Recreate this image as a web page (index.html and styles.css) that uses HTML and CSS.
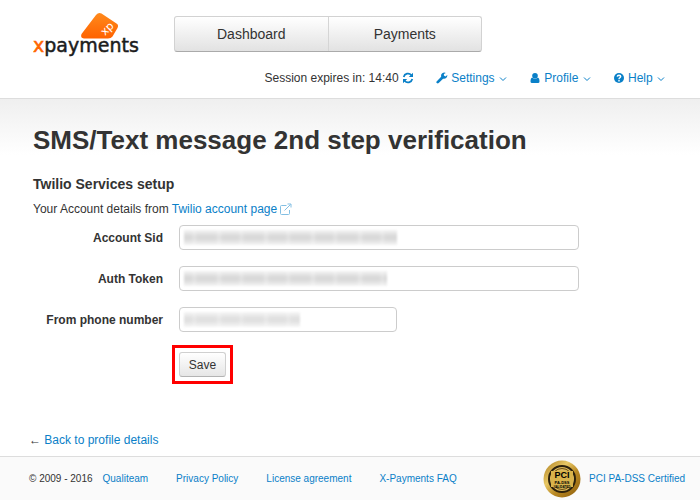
FILE: index.html
```html
<!DOCTYPE html>
<html lang="en">
<head>
  <meta charset="UTF-8">
  <title>SMS/Text message 2nd step verification</title>
  <link rel="stylesheet" href="styles.css">
</head>
<body>
  <header class="header">
    <div class="header-top">
      <a href="#" class="logo">
        <svg width="106" height="46" viewBox="0 0 106 46">
          <defs>
            <linearGradient id="card" x1="0" y1="0" x2="0" y2="1">
              <stop offset="0" stop-color="#ff8a1c"/>
              <stop offset="1" stop-color="#ff6200"/>
            </linearGradient>
          </defs>
          <path d="M51 26.500Q47 26 48.500 22L63 3Q65.500 0 68.500 1.500L83.500 11.500Q86 13 84.500 16L79.500 24.500Q78 26.500 75 26.500Z" fill="url(#card)"/>
          <text x="72" y="24" class="logo-mark" transform="rotate(-45 72 24)">xp</text>
          <text x="0" y="40" class="logo-text"><tspan class="logo-x">x</tspan>payments</text>
        </svg>
      </a>
      <nav class="main-nav">
        <a href="#">Dashboard</a>
        <a href="#">Payments</a>
      </nav>
    </div>
    <div class="user-bar">
      <span class="session">Session expires in: 14:40
        <a href="#" aria-label="Refresh session"><svg class="icon" viewBox="0 0 12 12"><path d="M1.700 5A4.400 4.400 0 0 1 9.400 3.200M10.300 7A4.400 4.400 0 0 1 2.600 8.800" fill="none" stroke="currentColor" stroke-width="1.700"/><path d="M11 .8V5H6.800ZM1 11.200V7H5.200Z" fill="currentColor"/></svg></a>
      </span>
      <a href="#" class="menu-link">
        <svg class="icon" viewBox="0 0 12 12"><path d="M11.300 3.100 9.400 4.400 7.900 3.600V2L9.800.9A3.300 3.300 0 0 0 5.200 4.800L.8 9.200a1.300 1.300 0 0 0 1.900 1.900L7.100 6.700A3.300 3.300 0 0 0 11.300 3.100Z" fill="currentColor"/></svg>
        Settings
        <svg class="caret" viewBox="0 0 8 6"><path d="M1 1.500 4 4.500 7 1.500" fill="none" stroke="currentColor"/></svg>
      </a>
      <a href="#" class="menu-link">
        <svg class="icon" viewBox="0 0 12 12"><circle cx="6" cy="3.800" r="2.800" fill="currentColor"/><path d="M3.200 5.400Q1.500 6 1.500 9.500 1.500 11 3 11H9Q10.500 11 10.500 9.500 10.500 6 8.800 5.400 6 8 3.200 5.400Z" fill="currentColor"/></svg>
        Profile
        <svg class="caret" viewBox="0 0 8 6"><path d="M1 1.500 4 4.500 7 1.500" fill="none" stroke="currentColor"/></svg>
      </a>
      <a href="#" class="menu-link">
        <svg class="icon" viewBox="0 0 12 12"><circle cx="6" cy="6" r="5" fill="currentColor"/><path d="M4.200 4.700Q4.400 3.200 6 3.200 7.700 3.300 7.700 4.600 7.700 5.400 6.700 5.900 6 6.200 6 7.200M6 8V9.400" fill="none" stroke="#fff" stroke-width="1.400"/></svg>
        Help
        <svg class="caret" viewBox="0 0 8 6"><path d="M1 1.500 4 4.500 7 1.500" fill="none" stroke="currentColor"/></svg>
      </a>
    </div>
  </header>

  <main class="content">
    <h1>SMS/Text message 2nd step verification</h1>
    <h2>Twilio Services setup</h2>
    <p class="intro">Your Account details from <a href="#">Twilio account page <svg class="icon external" viewBox="0 0 12 12"><path d="M6.500 2.500H1.500Q.5 2.500 .5 3.500V10.500Q.5 11.500 1.500 11.500H8.500Q9.500 11.500 9.500 10.500V7M4.500 7.500 10.500 1.500M7.500 1H11V4.500" fill="none" stroke="currentColor"/></svg></a></p>

    <form class="setup-form">
      <label for="sid">Account Sid</label>
      <div class="field">
        <input type="text" id="sid">
        <span class="masked masked-long"></span>
      </div>
      <label for="token">Auth Token</label>
      <div class="field">
        <input type="text" id="token">
        <span class="masked masked-medium"></span>
      </div>
      <label for="phone">From phone number</label>
      <div class="field field-short">
        <input type="text" id="phone">
        <span class="masked masked-short"></span>
      </div>
      <div class="highlight">
        <button type="button">Save</button>
      </div>
    </form>

    <p class="back">← <a href="#">Back to profile details</a></p>
  </main>

  <footer class="footer">
    <span>© 2009 - 2016</span>
    <a href="#" class="company">Qualiteam</a>
    <a href="#">Privacy Policy</a>
    <a href="#">License agreement</a>
    <a href="#">X-Payments FAQ</a>
    <a href="#" class="pci">
      <svg width="38" height="38" viewBox="0 0 38 38">
        <defs>
          <linearGradient id="gold" x1="0" y1="0" x2="1" y2="1">
            <stop offset="0" stop-color="#a87818"/>
            <stop offset=".35" stop-color="#e8c866"/>
            <stop offset=".6" stop-color="#b88722"/>
            <stop offset="1" stop-color="#8c5d0c"/>
          </linearGradient>
        </defs>
        <circle cx="19" cy="19" r="18.500" fill="url(#gold)"/>
        <circle cx="19" cy="19" r="13" fill="#dcb95a" stroke="#2c210c" stroke-width="2"/>
        <circle cx="19" cy="19" r="10.500" fill="none" stroke="#6d4f16"/>
        <path d="M8 11H30V27H8Z" fill="#d9b34b"/>
        <text x="19" y="18" class="seal-title">PCI</text>
        <text x="19" y="24" class="seal-text">PA-DSS</text>
        <text x="19" y="28" class="seal-small">VALIDATED</text>
      </svg>
      PCI PA-DSS Certified
    </a>
  </footer>
</body>
</html>
```

FILE: styles.css
```css
* {
  box-sizing: border-box;
}
body {
  margin: 0;
  min-height: 100vh;
  display: flex;
  flex-direction: column;
  font-family: "Liberation Sans", Arial, sans-serif;
  font-size: 12px;
  line-height: 16px;
  color: #333;
  background: #fff;
}
a {
  color: #0a80c8;
  text-decoration: none;
}
a:hover {
  text-decoration: underline;
}

/* Header */
.header {
  padding: 12px 35px 12px 33px;
  border-bottom: 1px solid #ddd;
}
.header-top {
  display: flex;
  gap: 35px;
  height: 46px;
}
.logo svg {
  display: block;
}
.logo-text {
  font-family: "DejaVu Sans", sans-serif;
  font-size: 19px;
  fill: #1c1c1c;
  stroke: #1c1c1c;
  stroke-width: .5px;
}
.logo-x {
  fill: #f60;
  stroke: #f60;
}
.logo-mark {
  font-family: "DejaVu Sans", sans-serif;
  font-size: 11px;
  fill: #fff;
}
.main-nav {
  display: flex;
  width: 308px;
  height: 36px;
  margin-top: 4px;
  border: 1px solid #d2d2d2;
  border-bottom-color: #aaa;
  border-radius: 3px;
  background: linear-gradient(#fff, #e2e2e2);
}
.main-nav a {
  flex: 1;
  font-size: 14px;
  line-height: 34px;
  text-align: center;
  color: #333;
}
.main-nav a + a {
  border-left: 1px solid #d5d5d5;
}
.user-bar {
  display: flex;
  justify-content: flex-end;
  gap: 22px;
  margin-top: 12px;
}
.icon {
  width: 12px;
  height: 12px;
  vertical-align: -2px;
}
.caret {
  width: 8px;
  height: 6px;
  margin-left: 1px;
}

/* Content */
.content {
  flex: 1;
  padding: 24px 33px 8px;
  background: linear-gradient(#efefef, #fff 56px);
}
h1 {
  margin: 0 0 18px;
  font-size: 26px;
  line-height: 34px;
}
h2 {
  margin: 0 0 8px;
  font-size: 14px;
  line-height: 18px;
}
.intro {
  margin: 0 0 8px;
}
.external {
  opacity: .5;
}
.setup-form {
  display: grid;
  grid-template-columns: 130px minmax(0, 400px);
  column-gap: 16px;
  row-gap: 16px;
  align-items: center;
}
.setup-form label {
  font-weight: bold;
  text-align: right;
}
.field {
  position: relative;
}
.field-short {
  width: 218px;
}
.field input {
  display: block;
  width: 100%;
  height: 25px;
  padding: 4px 6px;
  border: 1px solid #ccc;
  border-radius: 4px;
  font: inherit;
}
/* hidden credentials */
.masked {
  position: absolute;
  top: 5px;
  left: 5px;
  height: 15px;
  background:
    repeating-linear-gradient(90deg, transparent 0 7px, rgba(255, 255, 255, .25) 10px, transparent 14px 31px, rgba(255, 255, 255, .3) 35px, transparent 39px 47px),
    linear-gradient(#f4f4f4, #d9d9d9 40%, #d9d9d9 60%, #f4f4f4);
  filter: blur(1px);
}
.masked-long {
  width: 213px;
}
.masked-medium {
  width: 203px;
}
.masked-short {
  width: 116px;
  opacity: .8;
}
.highlight {
  grid-column: 2;
  justify-self: start;
  margin: -3px 0 0 -7px;
  padding: 4px;
  border: 3px solid #f00;
}
.highlight button {
  display: block;
  width: 47px;
  height: 25px;
  padding: 0;
  border: 1px solid #d0d0d0;
  border-bottom-color: #b3b3b3;
  border-radius: 3px;
  background: linear-gradient(#fff, #e6e6e6);
  font: inherit;
  color: #333;
}
.back {
  margin: 48px 0 0 -4px;
}

/* Footer */
.footer {
  display: flex;
  align-items: center;
  height: 44px;
  padding: 0 15px 0 29px;
  gap: 28px;
  border-top: 1px solid #ddd;
  background: #fafafa;
  font-size: 10px;
}
.company {
  margin-left: -18px;
}
.pci {
  display: flex;
  align-items: center;
  gap: 8px;
  margin-left: auto;
}
.seal-title {
  font-size: 9px;
  font-weight: bold;
  text-anchor: middle;
}
.seal-text {
  font-size: 4px;
  font-weight: bold;
  text-anchor: middle;
}
.seal-small {
  font-size: 3px;
  font-weight: bold;
  text-anchor: middle;
}
```
